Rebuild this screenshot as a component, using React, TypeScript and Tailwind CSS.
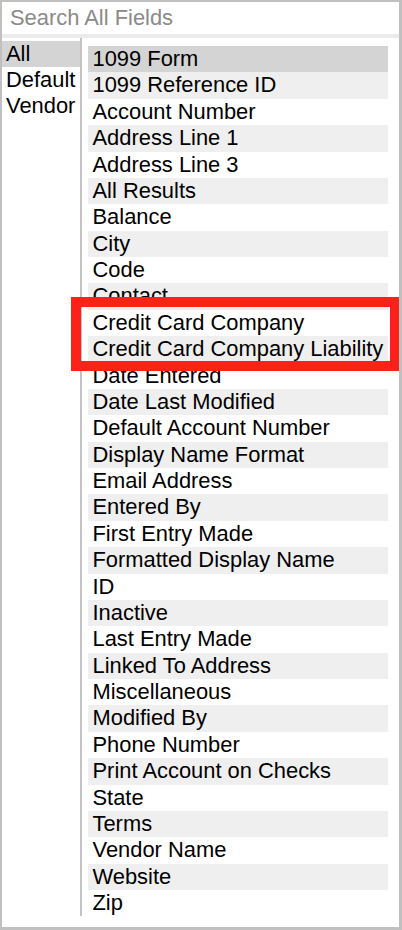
import React from 'react';

const groups = ['All', 'Default', 'Vendor'];

const fields = [
  '1099 Form',
  '1099 Reference ID',
  'Account Number',
  'Address Line 1',
  'Address Line 3',
  'All Results',
  'Balance',
  'City',
  'Code',
  'Contact',
  'Credit Card Company',
  'Credit Card Company Liability',
  'Date Entered',
  'Date Last Modified',
  'Default Account Number',
  'Display Name Format',
  'Email Address',
  'Entered By',
  'First Entry Made',
  'Formatted Display Name',
  'ID',
  'Inactive',
  'Last Entry Made',
  'Linked To Address',
  'Miscellaneous',
  'Modified By',
  'Phone Number',
  'Print Account on Checks',
  'State',
  'Terms',
  'Vendor Name',
  'Website',
  'Zip',
];

export default function App() {
  return (
    <div
      className="relative w-[402px] h-[930px] bg-white border-t-2 border-l-2 border-r-[3px] border-b-[3px] border-[#c0c0c0] text-black text-[21.9px] overflow-hidden"
      style={{ fontFamily: '"Liberation Sans", Arial, sans-serif' }}
    >
      {/* search */}
      <div className="h-[32px] flex items-center pl-[8px]">
        <input
          type="text"
          placeholder="Search All Fields"
          className="w-full bg-transparent outline-none leading-none placeholder:text-[#8a8a8a]"
        />
      </div>
      <div className="h-[4px] bg-[#ebebeb]" />

      {/* body */}
      <div className="flex">
        <div className="w-[78px] pt-[3px]">
          {groups.map((g, i) => (
            <div
              key={g}
              className={`h-[26px] leading-[26px] pl-[4px] ${i === 0 ? 'bg-[#d4d4d4]' : ''}`}
            >
              {g}
            </div>
          ))}
        </div>
        <div className="w-[2px] bg-[#c4c4c4]" />
        <div className="pl-[6px] pt-[8px]">
          <div className="w-[300px]">
            {fields.map((f, i) => (
              <div
                key={f}
                className={`h-[26.375px] leading-[26.375px] pl-[4.5px] whitespace-nowrap ${
                  i === 0 ? 'bg-[#d4d4d4]' : i % 2 === 1 ? 'bg-[#efefef]' : ''
                }`}
              >
                {f}
              </div>
            ))}
          </div>
        </div>
      </div>

      {/* highlight */}
      <div className="absolute left-[69px] top-[295px] w-[329px] h-[74px] border-[10px] border-[#fc2119]" />
    </div>
  );
}
